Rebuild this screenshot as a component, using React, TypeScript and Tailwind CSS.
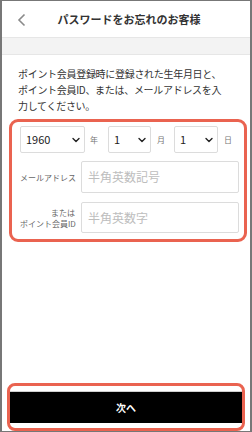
import React from "react";

const Chevron = () => (
  <svg width="8" height="6" viewBox="0 0 8 6" className="shrink-0">
    <path d="M1 1.5 L4 4.5 L7 1.5" fill="none" stroke="#222" strokeWidth="1.4" strokeLinecap="round" strokeLinejoin="round" />
  </svg>
);

function Select({ value, w }: { value: string; w: string }) {
  return (
    <div className={`${w} h-[27px] border border-[#dcdcdc] rounded-[2px] bg-white flex items-center justify-between pl-[5px] pr-[4px]`}>
      <span className="text-[11px] text-[#222]">{value}</span>
      <Chevron />
    </div>
  );
}

export default function App() {
  const font = { fontFamily: '"Noto Sans CJK JP", "Noto Sans", sans-serif' };
  return (
    <div style={font} className="w-[252px] h-[432px] bg-white border-x-2 border-y border-[#777] flex flex-col overflow-hidden">
      {/* header */}
      <div className="h-[37px] flex items-center relative border-b border-[#e6e6e6]">
        <svg width="10" height="14" viewBox="0 0 10 14" className="absolute left-[15px] top-[12px]">
          <path d="M7.5 1.5 L2 7 L7.5 12.5" fill="none" stroke="#8a8a8a" strokeWidth="1.6" />
        </svg>
        <div className="w-full text-center text-[11px] font-bold text-[#333] pl-[6px]">パスワードをお忘れのお客様</div>
      </div>
      <div className="h-[17px] bg-[#f3f3f3] border-b border-[#e6e6e6]" />

      {/* paragraph */}
      <div className="pl-[16px] pr-[12px] pt-[11px] text-[10px] leading-[16px] text-[#333] tracking-[-0.3px]">
        ポイント会員登録時に登録された生年月日と、<br />
        ポイント会員ID、または、メールアドレスを入<br />
        力してください。
      </div>

      {/* form box */}
      <div className="mx-[7px] mt-[5px] w-[238px] border-[3px] border-[#ea6350] rounded-[9px] pl-[8px] pr-[5px] pt-[4px] pb-[6px]">
        <div className="flex items-center">
          <Select value="1960" w="w-[65px]" />
          <span className="text-[8px] text-[#777] ml-[5px] w-[18px]">年</span>
          <Select value="1" w="w-[43px]" />
          <span className="text-[8px] text-[#777] ml-[6px] w-[17px]">月</span>
          <Select value="1" w="w-[44px]" />
          <span className="text-[8px] text-[#777] ml-[6px]">日</span>
        </div>
        <div className="flex items-center mt-[8px]">
          <div className="w-[55px] text-right text-[8px] text-[#666] leading-[11px] whitespace-nowrap">メールアドレス</div>
          <div className="ml-[6px] w-[158px] h-[32px] border border-[#dcdcdc] rounded-[2px] flex items-center pl-[6px] text-[12px] text-[#bdbdbd]">半角英数記号</div>
        </div>
        <div className="flex items-center mt-[9px]">
          <div className="w-[55px] text-right text-[8px] text-[#666] leading-[11px] whitespace-nowrap">
            または<br />ポイント会員ID
          </div>
          <div className="ml-[6px] w-[158px] h-[31px] border border-[#dcdcdc] rounded-[2px] flex items-center pl-[6px] text-[12px] text-[#bdbdbd]">半角英数字</div>
        </div>
      </div>

      {/* footer */}
      <div className="mt-auto mx-[5px] border-[3px] border-[#ea6350] rounded-[8px] h-[48px] pt-[5px] bg-white">
        <div className="border-t border-[#cfcfcf]">
          <div className="h-[31px] bg-black flex items-center justify-center text-white text-[10px] font-bold">次へ</div>
        </div>
      </div>
    </div>
  );
}
